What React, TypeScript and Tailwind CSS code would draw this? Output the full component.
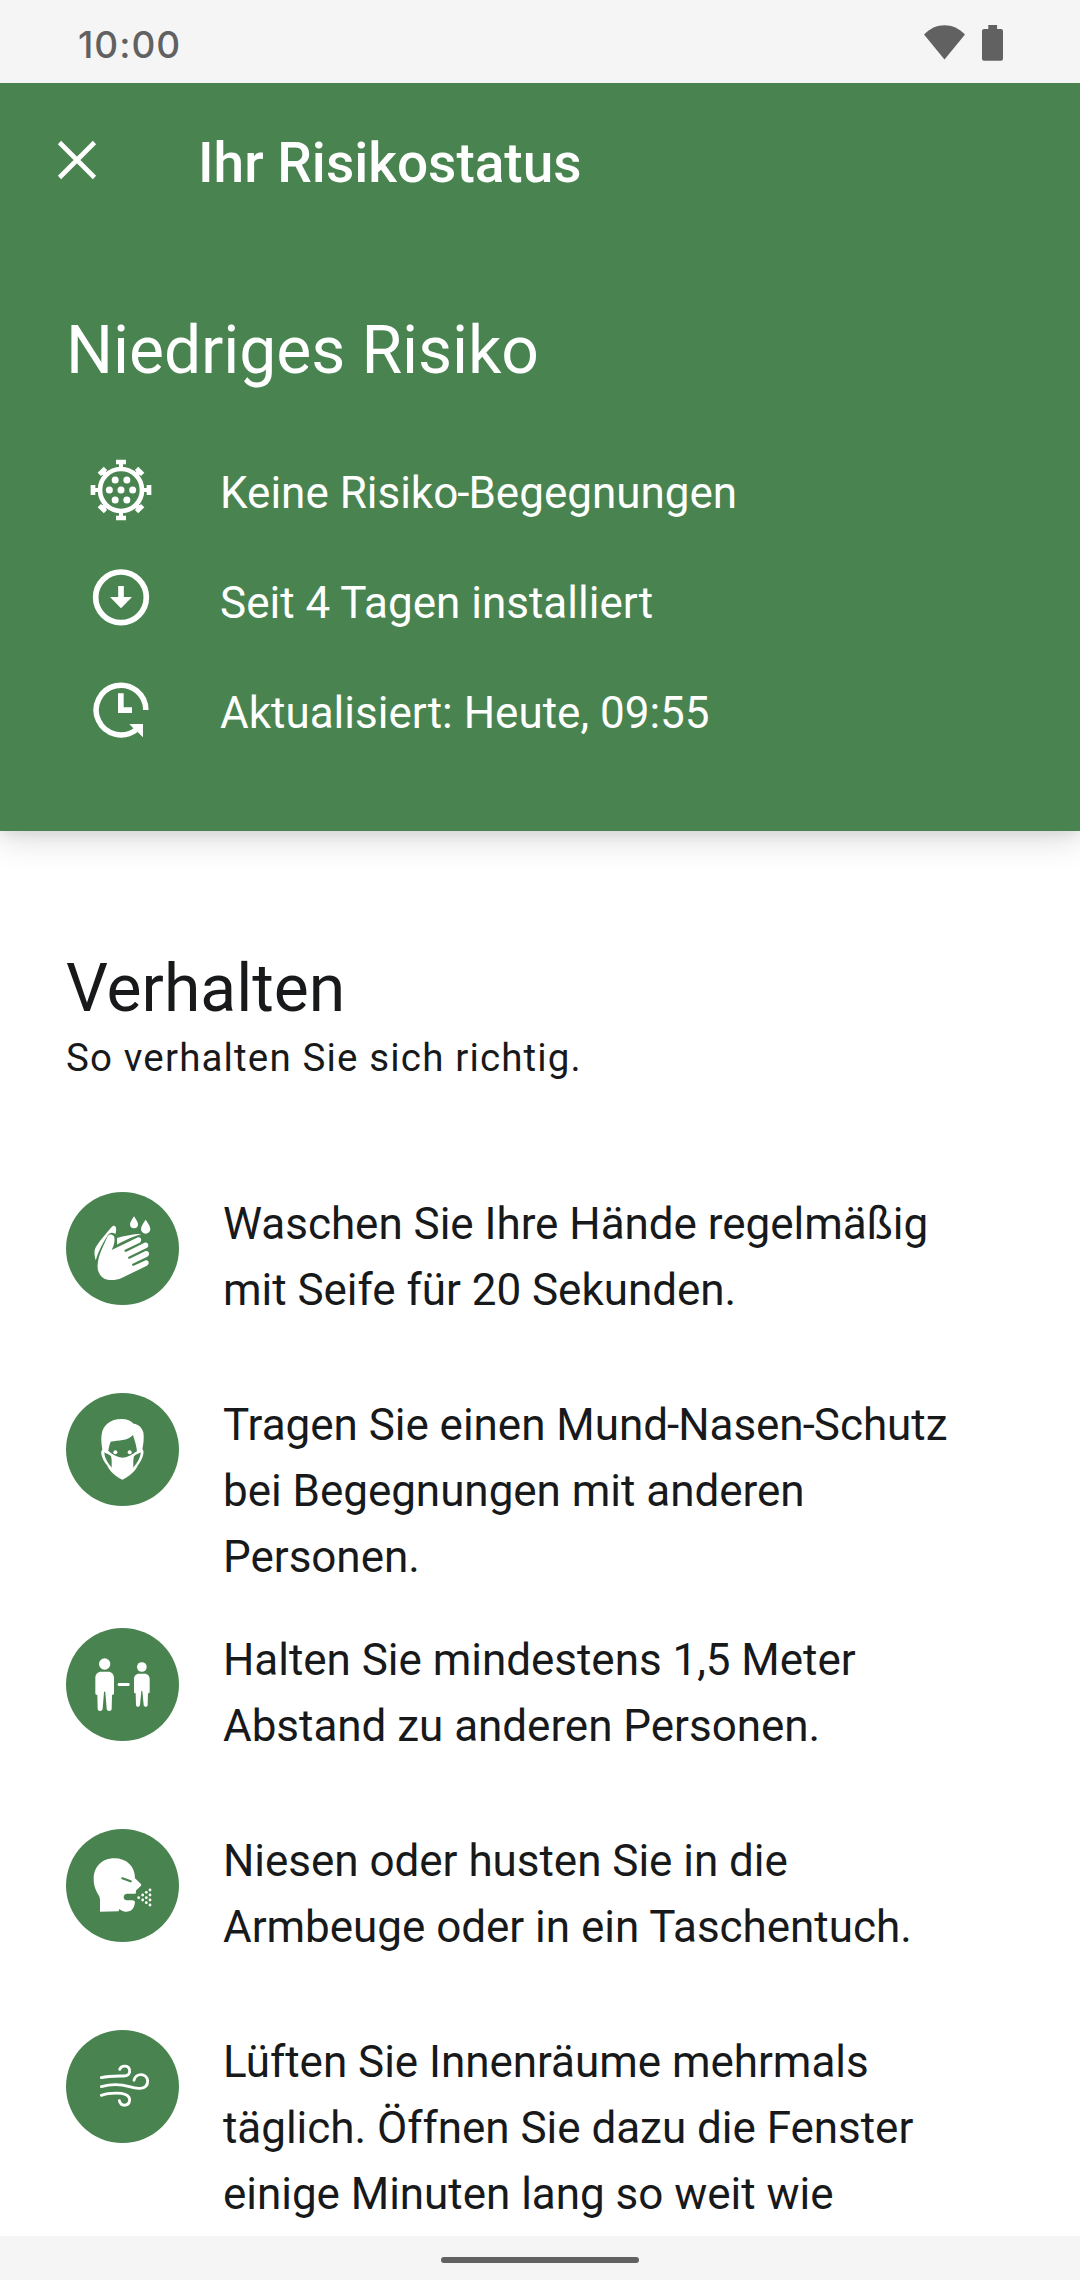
import { Fragment, type ReactNode } from 'react';

function VirusIcon() {
  return (
    <svg className="size-20" viewBox="63 39 240 240" fill="#fff">
      <circle cx="183" cy="150" r="63" fill="none" stroke="#fff" strokeWidth="14" />
      {[0, 45, 90, 135, 180, 225, 270, 315].map((a) => (
        <g key={a} transform={`rotate(${a} 183 150)`}>
          <path d={a % 90 === 0 ? 'M168 59h30v14h-9v12h-12v-12h-9z' : 'M170 64h26v14h-6v8h-14v-8h-6z'} />
        </g>
      ))}
      {[[165.5, 120], [200.5, 120], [148, 150], [183, 150], [218, 150], [165.5, 180], [200.5, 180]].map(([x, y]) => (
        <circle key={`${x}-${y}`} cx={x} cy={y} r="10.5" />
      ))}
    </svg>
  );
}

function InstalledIcon() {
  return (
    <svg className="size-20" viewBox="63 369 240 240" fill="#fff">
      <circle cx="183" cy="472" r="76" fill="none" stroke="#fff" strokeWidth="17" />
      <path d="M174.500 438h17v33H216l-33 33.500-33-33.500h24.500z" />
    </svg>
  );
}

function UpdatedIcon() {
  return (
    <svg className="size-20" viewBox="63 699 240 240" fill="#fff">
      <path d="M257.500 810A74.500 74.500 0 1 0 228 869.500" fill="none" stroke="#fff" strokeWidth="16.500" />
      <path d="M174 760h17v42h25v17h-42zM208 852h41v40l-17-17-12-10z" />
    </svg>
  );
}

function HandsIcon() {
  return (
    <svg className="size-full" viewBox="18 36 339 339" fill="#fff">
      <path d="M222 109c6 10 12 17 12 24a12 12 0 0 1-24 0c0-7 6-14 12-24zM257 119c7 11 14 19 14 28a14 14 0 0 1-28 0c0-9 7-17 14-28z" />
      <path d="M107 241c-5-20-5-33 3-44 13-19 31-40 45-56 6-7 12-4 13 3 1 8 0 13-2 18-8-5-16-5-22 3-13 20-28 45-37 76z" />
      <path d="M171 174c22-6 44-10 62-12 5 0 10-1 10 1-20 5-46 17-72 31z" />
      <path d="M143 169c4-8 17-7 20 3 2 12-1 24-8 38l76-37c8-4 14 2 12 9-1 4-3 6-7 8l-41 19c-4 3-1 8 4 6l53-26c7-4 14 1 13 8-1 4-3 6-7 8l-52 25c-4 3-1 7 3 6l46-22c7-3 13 1 12 8 0 4-3 7-7 9l-42 20c-4 3-2 7 3 6l33-15c7-3 13 1 12 8-1 4-3 6-7 8l-74 36c-18 8-39 8-52 2-15-9-22-24-20-43 3-29 15-51 30-84z" />
    </svg>
  );
}

function MaskIcon() {
  return (
    <svg className="size-full" viewBox="18 39 339 339" fill="#fff">
      <path d="M127 209c-3-18-4-34-2-46 4-28 26-46 59-46 17 0 29 5 37 14 15 2 25 12 29 26 3 17 0 35-3 51 4 3 4 8 3 14-2 12-9 24-16 34-10 20-27 34-47 43-20-9-36-23-46-43-8-10-15-22-17-34-1-6 0-11 3-13z" />
      <path d="M145 213c1-11 4-20 7-28 25-5 49-1 67-20 5 16 10 31 12 48-14 11-27 19-43 20-17-1-30-9-43-20z" fill="#498450" />
      <circle cx="166" cy="217" r="6" />
      <circle cx="209" cy="217" r="6" />
      <path d="M133 217c8 6 17 7 20 12 3 10 2 22 2 34-9-11-22-28-22-46zM242 217c-8 6-17 7-20 12-3 10-2 22-2 34 9-11 22-28 22-46z" fill="#498450" />
    </svg>
  );
}

function DistanceIcon() {
  return (
    <svg className="size-full" viewBox="18 39 339 339" fill="#fff">
      <circle cx="134" cy="147" r="17" />
      <path d="M124 170h20c11 0 18 8 18 19v46c0 4-3 5-6 5l-1 41c0 9-14 9-15 0l-4-49c0-3-4-3-4 0l-4 49c-1 9-15 9-15 0l-1-41c-4 0-6-2-6-5v-46c0-11 7-19 18-19z" />
      <circle cx="245.500" cy="156" r="14.500" />
      <path d="M237 176h17c9 0 15 7 15 16v39c0 3-2 4-5 4l-1 35c0 7-11 7-12 0l-4-41c0-2-3-2-3 0l-4 41c-1 7-12 7-12 0l-1-35c-3 0-5-1-5-4v-39c0-9 6-16 15-16z" />
      <rect x="173" y="204" width="36" height="9" rx="4" />
    </svg>
  );
}

function CoughIcon() {
  return (
    <svg className="size-full" viewBox="18 42 339 339" fill="#fff">
      <path d="M120 290v-35c0-10-4-14-10-25-6-12-9-22-9-37 0-38 25-63 62-63 36 0 62 23 62 60l17 16c2 2 2 4 1 6l-11 11c-3 2-4 3-4 6l-1 7h-25c-7 0-11 5-11 10 0 7 5 10 11 10 9 0 21-2 23 5-2 18-9 29-27 29-9 0-15-4-20-8l-2 7z" />
      <path d="M187 190l25 9" stroke="#498450" strokeWidth="6.500" strokeLinecap="round" fill="none" />
      {[[236, 248], [248, 240], [248, 255], [259, 232], [259, 248], [259, 263], [270, 225], [270, 240], [270, 255], [270, 270]].map(([x, y]) => (
        <circle key={`${x}-${y}`} cx={x} cy={y} r="4.200" />
      ))}
    </svg>
  );
}

function WindIcon() {
  return (
    <svg className="size-full" viewBox="18 45 339 339" fill="none" stroke="#fff" strokeWidth="8.500" strokeLinecap="round">
      <path d="M124 188c22-6 44-5 67-5 13 0 19-7 18-16-1-17-24-18-30-4" />
      <path d="M124 215c28-8 60-7 84 0 13 4 22 6 33 5 16-1 22-11 22-22-2-24-36-26-41-2" />
      <path d="M124 241c22-8 43-7 60-6 15 2 24 8 25 19-1 20-26 23-31 3" />
    </svg>
  );
}

/* Sets hyphens slightly tighter than the surrounding text. */
function Tight({ text }: { text: string }) {
  return (
    <>
      {text.split('-').map((part, i) => (
        <Fragment key={part}>
          {i > 0 && <span className="-mx-px">-</span>}
          {part}
        </Fragment>
      ))}
    </>
  );
}

const facts: { icon: ReactNode; text: string }[] = [
  { icon: <VirusIcon />, text: 'Keine Risiko-Begegnungen' },
  { icon: <InstalledIcon />, text: 'Seit 4 Tagen installiert' },
  { icon: <UpdatedIcon />, text: 'Aktualisiert: Heute, 09:55' },
];

const tips: { icon: ReactNode; lines: string[] }[] = [
  { icon: <HandsIcon />, lines: ['Waschen Sie Ihre Hände regelmäßig', 'mit Seife für 20 Sekunden.'] },
  { icon: <MaskIcon />, lines: ['Tragen Sie einen Mund-Nasen-Schutz', 'bei Begegnungen mit anderen', 'Personen.'] },
  { icon: <DistanceIcon />, lines: ['Halten Sie mindestens 1,5 Meter', 'Abstand zu anderen Personen.'] },
  { icon: <CoughIcon />, lines: ['Niesen oder husten Sie in die', 'Armbeuge oder in ein Taschentuch.'] },
  { icon: <WindIcon />, lines: ['Lüften Sie Innenräume mehrmals', 'täglich. Öffnen Sie dazu die Fenster', 'einige Minuten lang so weit wie'] },
];

function StatusBar() {
  return (
    <div className="relative z-10 flex h-[83px] shrink-0 items-start justify-between bg-[#f5f5f5] pl-[78px] pr-[77px] text-[#616161]">
      <div className="mt-[22px] font-['Inter',sans-serif] text-[37px] leading-[45px] font-medium tracking-[1px]">10:00</div>
      <div className="mt-[25px] flex gap-[17px]">
        <svg className="h-[36px] w-[41px]" viewBox="0 0 41 36" fill="currentColor">
          <path d="M0 9.500C11.500-3 29.500-3 41 9.500L20.500 34.500z" />
        </svg>
        <svg className="h-[36px] w-[21px]" viewBox="0 0 21 36" fill="currentColor">
          <path d="M6.300 0h8.800v4H19a2 2 0 0 1 2 2v27.700a2 2 0 0 1-2 2H2a2 2 0 0 1-2-2V6a2 2 0 0 1 2-2h4.300z" />
        </svg>
      </div>
    </div>
  );
}

export default function App() {
  return (
    <div className="flex h-[2280px] w-[1080px] flex-col overflow-hidden bg-white font-['Roboto',sans-serif] text-[#17191a]">
      <StatusBar />
      <header className="h-[748px] shrink-0 bg-[#498450] text-white shadow-[0_10px_30px_rgba(0,0,0,0.13),0_3px_12px_rgba(0,0,0,0.08)]">
        <div className="flex h-[154px] items-center pl-[44px]">
          <svg className="size-[66px]" viewBox="0 0 66 66" fill="none" stroke="#fff" strokeWidth="4.600">
            <path d="M15.500 15.500l35 35m0-35l-35 35" />
          </svg>
          <h1 className="mt-[6px] ml-[88px] text-[55px] leading-[64px] font-medium">Ihr Risikostatus</h1>
        </div>
        <h2 className="mt-[75px] pl-[66px] text-[66px] leading-[77px] tracking-[-0.080px]">Niedriges Risiko</h2>
        <ul className="mt-[49px] pl-[81px]">
          {facts.map((f) => (
            <li key={f.text} className="flex h-[110px] items-center gap-[59px]">
              {f.icon}
              <span className="text-[44px] leading-[52px]"><Tight text={f.text} /></span>
            </li>
          ))}
        </ul>
      </header>
      <main className="min-h-0 flex-1 px-[66px]">
        <h2 className="mt-[119px] text-[66px] leading-[77px]">Verhalten</h2>
        <p className="mt-[8px] text-[38.500px] leading-[46px] tracking-[1.150px]">So verhalten Sie sich richtig.</p>
        <ul className="mt-[111px]">
          {tips.map((t) => (
            <li key={t.lines[0]} className="mb-[37px] flex min-h-[164px] gap-[44px]">
              <div className="size-[113px] shrink-0 rounded-full bg-[#498450]">{t.icon}</div>
              <p className="-mt-px mb-px text-[44px] leading-[66px] tracking-[-0.030px]">
                {t.lines.map((l) => (
                  <span key={l} className="block whitespace-nowrap"><Tight text={l} /></span>
                ))}
              </p>
            </li>
          ))}
        </ul>
      </main>
      <footer className="flex h-[44px] shrink-0 justify-center bg-[#f5f5f5] pt-[21px]">
        <div className="h-[6px] w-[198px] rounded-full bg-[#616161]" />
      </footer>
    </div>
  );
}
